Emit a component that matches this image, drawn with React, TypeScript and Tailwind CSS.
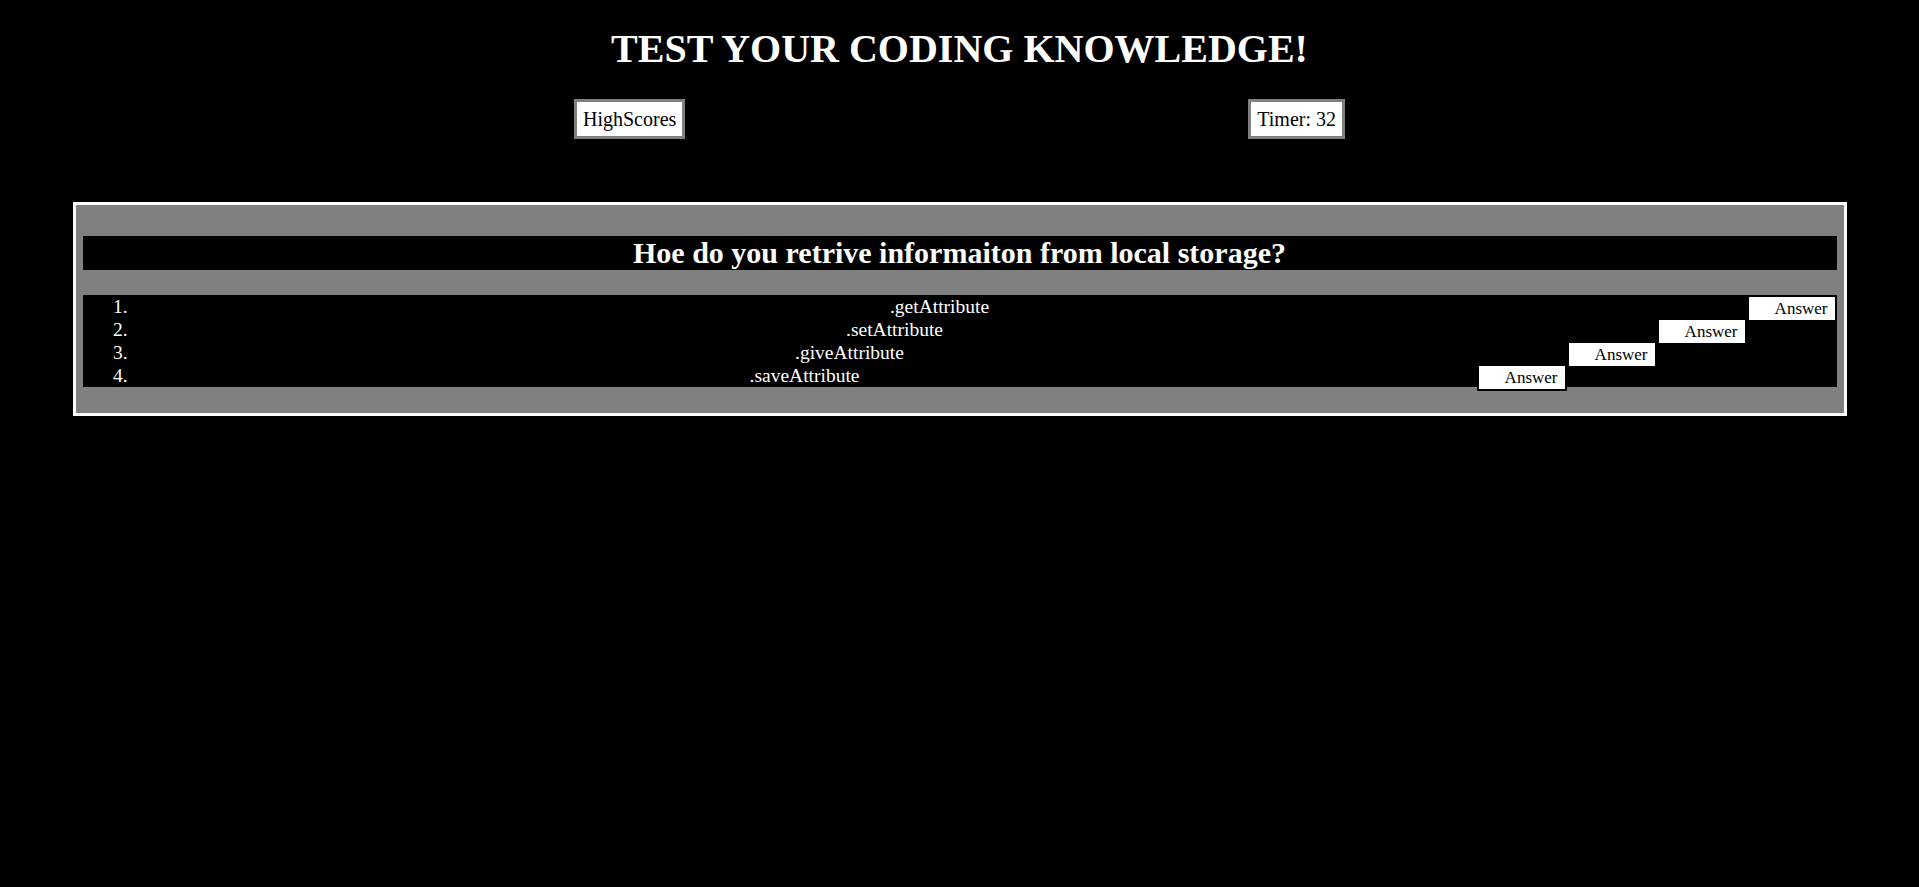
const answers = [".getAttribute", ".setAttribute", ".giveAttribute", ".saveAttribute"];

export default function App() {
  return (
    <div className="min-h-screen bg-black pt-[26px] font-['Liberation_Serif',serif] text-white">
      <h1 className="text-center text-[40px] font-bold leading-[46px]">TEST YOUR CODING KNOWLEDGE!</h1>

      <div className="mx-auto mt-[27px] flex w-[771px] justify-between">
        <button className="border-[3px] border-[#808080] bg-white px-[6px] py-[5px] text-[20px] leading-[24px] text-black">
          HighScores
        </button>
        <div className="border-[3px] border-[#808080] bg-white px-[6px] py-[5px] text-[20px] leading-[24px] text-black">
          Timer: 32
        </div>
      </div>

      <div className="mx-auto mt-[63px] w-[1774px] border-[3px] border-white bg-[#808080] px-[7px] pt-[31px] pb-[26px]">
        <h2 className="bg-black text-center text-[30px] font-bold leading-[34px]">
          Hoe do you retrive informaiton from local storage?
        </h2>
        <ol className="mt-[25px] list-outside list-decimal bg-black pl-[50px] text-[19.5px] leading-[23px]">
          {answers.map((a) => (
            <li key={a} className="text-center">
              <button className="float-right h-[27px] w-[90px] border-2 border-black bg-white pr-[7px] text-right text-[17px] leading-[23px] text-black">
                Answer
              </button>
              {a}
            </li>
          ))}
        </ol>
      </div>
    </div>
  );
}
